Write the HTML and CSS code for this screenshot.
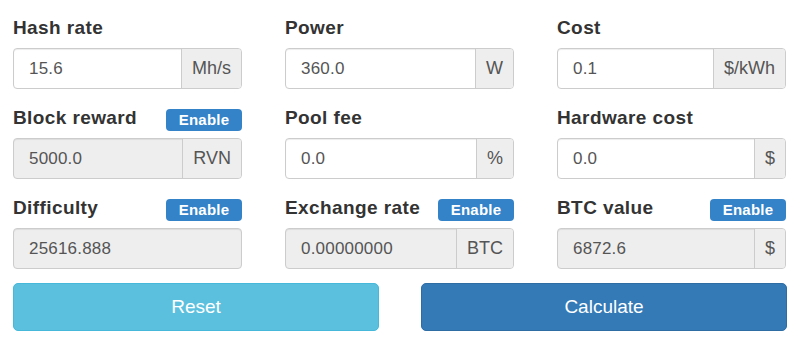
FILE: index.html
```html
<!DOCTYPE html>
<html>
<head>
<meta charset="utf-8">
<link rel="stylesheet" href="styles.css">
</head>
<body>
<div class="calc">
  <div class="fields">
    <div class="field">
      <div class="label-row"><span class="label">Hash rate</span></div>
      <div class="input-group"><div class="input">15.6</div><div class="addon">Mh/s</div></div>
    </div>
    <div class="field">
      <div class="label-row"><span class="label">Power</span></div>
      <div class="input-group"><div class="input">360.0</div><div class="addon">W</div></div>
    </div>
    <div class="field">
      <div class="label-row"><span class="label">Cost</span></div>
      <div class="input-group"><div class="input">0.1</div><div class="addon">$/kWh</div></div>
    </div>

    <div class="field">
      <div class="label-row"><span class="label">Block reward</span><span class="badge">Enable</span></div>
      <div class="input-group disabled"><div class="input">5000.0</div><div class="addon">RVN</div></div>
    </div>
    <div class="field">
      <div class="label-row"><span class="label">Pool fee</span></div>
      <div class="input-group"><div class="input">0.0</div><div class="addon">%</div></div>
    </div>
    <div class="field">
      <div class="label-row"><span class="label">Hardware cost</span></div>
      <div class="input-group"><div class="input">0.0</div><div class="addon">$</div></div>
    </div>

    <div class="field">
      <div class="label-row"><span class="label">Difficulty</span><span class="badge">Enable</span></div>
      <div class="input-group disabled"><div class="input">25616.888</div></div>
    </div>
    <div class="field">
      <div class="label-row"><span class="label">Exchange rate</span><span class="badge">Enable</span></div>
      <div class="input-group disabled"><div class="input">0.00000000</div><div class="addon">BTC</div></div>
    </div>
    <div class="field">
      <div class="label-row"><span class="label">BTC value</span><span class="badge">Enable</span></div>
      <div class="input-group disabled"><div class="input">6872.6</div><div class="addon">$</div></div>
    </div>
  </div>
  <div class="actions">
    <button class="btn btn-info">Reset</button>
    <button class="btn btn-primary">Calculate</button>
  </div>
</div>
</body>
</html>
```
FILE: styles.css
```css
html, body {
  margin: 0;
  padding: 0;
  background: #fff;
}
body {
  font-family: "Liberation Sans", Arial, sans-serif;
  color: #333;
}
.calc {
  width: 774px;
  padding: 19px 0 0 13px;
}
.fields {
  display: grid;
  grid-template-columns: 229px 229px 229px;
  column-gap: 43px;
  row-gap: 20px;
}
.field {
  display: flex;
  flex-direction: column;
  gap: 7px;
}
.label-row {
  height: 22px;
  display: flex;
  justify-content: space-between;
  align-items: flex-start;
}
.label {
  font-weight: bold;
  font-size: 19px;
  letter-spacing: 0.4px;
  line-height: 18px;
  margin-top: 0;
  color: #333;
}
.badge {
  width: 76px;
  height: 22px;
  box-sizing: border-box;
  background: #3483c9;
  color: #fff;
  border-radius: 4px;
  font-weight: bold;
  font-size: 15px;
  line-height: 22px;
  text-align: center;
  letter-spacing: 0.2px;
}
.input-group {
  display: flex;
  height: 41px;
  box-sizing: border-box;
  border: 1px solid #ccc;
  border-radius: 4px;
  box-shadow: inset 0 1px 1px rgba(0,0,0,0.075);
  overflow: hidden;
  background: #fff;
}
.input-group.disabled {
  background: #eee;
}
.input {
  flex: 1;
  display: flex;
  align-items: center;
  padding: 0 15px;
  font-size: 17px;
  color: #555;
  letter-spacing: 0.2px;
}
.addon {
  display: flex;
  align-items: center;
  padding: 0 10px;
  background: #eee;
  border-left: 1px solid #ccc;
  font-size: 18px;
  color: #555;
}
.actions {
  display: grid;
  grid-template-columns: 1fr 1fr;
  column-gap: 42px;
  margin-top: 14px;
}
.btn {
  height: 48px;
  border-radius: 5px;
  font-family: "Liberation Sans", Arial, sans-serif;
  font-size: 19px;
  color: #fff;
  cursor: pointer;
  padding: 0;
}
.btn-info {
  background: #5bc0de;
  border: 1px solid #46b8da;
}
.btn-primary {
  background: #337ab7;
  border: 1px solid #2e6da4;
}
```
